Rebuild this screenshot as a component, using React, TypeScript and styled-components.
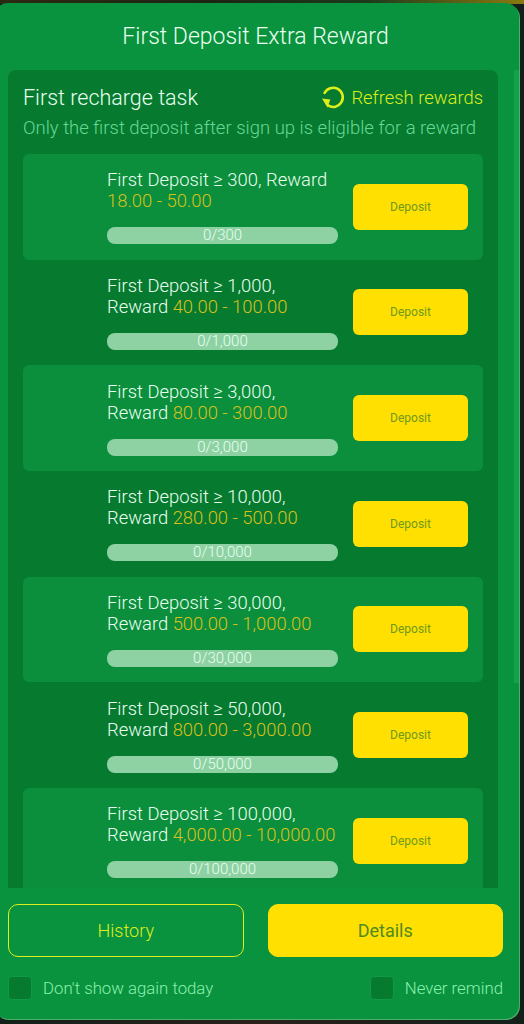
import React from 'react';
import styled, { createGlobalStyle } from 'styled-components';

const tasks = [
  { min: '300', reward: '18.00 - 50.00', goal: '0/300' },
  { min: '1,000', reward: '40.00 - 100.00', goal: '0/1,000' },
  { min: '3,000', reward: '80.00 - 300.00', goal: '0/3,000' },
  { min: '10,000', reward: '280.00 - 500.00', goal: '0/10,000' },
  { min: '30,000', reward: '500.00 - 1,000.00', goal: '0/30,000' },
  { min: '50,000', reward: '800.00 - 3,000.00', goal: '0/50,000' },
  { min: '100,000', reward: '4,000.00 - 10,000.00', goal: '0/100,000' },
];

const RefreshIcon = () => (
  <svg width="24" height="24" viewBox="0 0 24 24" fill="none">
    <path
      d="M3.6 8A9.6 9.6 0 1 1 7 20.4"
      stroke="#dcee1c"
      strokeWidth="2.6"
      strokeLinecap="round"
    />
    <path d="M1 13.4L9.4 14.6L6.4 22.4Z" fill="#dcee1c" />
  </svg>
);

export default function App() {
  return (
    <>
      <GlobalStyle />
      <Screen>
        <Panel>
          <Title>First Deposit Extra Reward</Title>
          <Task>
            <TaskHead>
              <TaskName>First recharge task</TaskName>
              <Refresh>
                <RefreshIcon />
                Refresh rewards
              </Refresh>
            </TaskHead>
            <Hint>Only the first deposit after sign up is eligible for a reward</Hint>
            <Rows>
              {tasks.map((t, i) => (
                <Row key={t.min} $shaded={i % 2 === 0}>
                  <Info>
                    <Text>
                      First Deposit ≥ {t.min}, Reward <Amount>{t.reward}</Amount>
                    </Text>
                    <Progress>{t.goal}</Progress>
                  </Info>
                  <DepositButton>Deposit</DepositButton>
                </Row>
              ))}
            </Rows>
          </Task>
          <Actions>
            <HistoryButton>History</HistoryButton>
            <DetailsButton>Details</DetailsButton>
          </Actions>
          <Options>
            <Option>
              <Check />
              Don't show again today
            </Option>
            <Option>
              <Check />
              Never remind
            </Option>
          </Options>
          <ScrollTrack />
        </Panel>
      </Screen>
    </>
  );
}

// ----- Styles ------ //

const GlobalStyle = createGlobalStyle`
  html, body {
    margin: 0;
    padding: 0;
    background: #16201a;
  }
  * {
    box-sizing: border-box;
  }
`;

const Screen = styled.div`
  width: 524px;
  height: 1024px;
  overflow: hidden;
  padding: 3px 5px 5px 0;
  font-family: Roboto, 'Liberation Sans', sans-serif;
  font-weight: 300;
  background: linear-gradient(90deg, #2c2a12 0%, #1e2414 40%, #1c3a1c 70%, #8a7a10 100%) top / 100% 4px no-repeat,
    linear-gradient(90deg, #13201a 0%, #2a201a 50%, #13201a 100%);
`;

const Panel = styled.div`
  position: relative;
  height: 100%;
  margin-left: -6px;
  padding: 0 0 0 14px;
  display: flex;
  flex-direction: column;
  background: #0a933e;
  border-radius: 14px;
  box-shadow: 1px 1px 0 #4fae6c;
`;

const Title = styled.div`
  width: 495px;
  height: 67px;
  padding-top: 18px;
  text-align: center;
  font-size: 23px;
  line-height: 32px;
  color: #e9fff0;
`;

const Task = styled.div`
  width: 490px;
  height: 818px;
  padding: 14px 15px 0;
  background: #067b2f;
  border-radius: 8px 8px 0 0;
  overflow: hidden;
`;

const TaskHead = styled.div`
  display: flex;
  align-items: center;
  justify-content: space-between;
  height: 26px;
`;

const TaskName = styled.div`
  font-size: 21.5px;
  color: #e9fff0;
`;

const Refresh = styled.div`
  display: flex;
  align-items: center;
  gap: 6px;
  font-size: 18.4px;
  color: #dcee1c;
`;

const Hint = styled.div`
  margin-top: 6px;
  height: 38px;
  font-size: 18.5px;
  line-height: 24px;
  color: #66d896;
  white-space: nowrap;
`;

const Rows = styled.div`
  display: flex;
  flex-direction: column;
`;

const Row = styled.div<{ $shaded: boolean }>`
  flex: none;
  height: 105.67px;
  padding: 0 15px 0 84px;
  display: flex;
  align-items: center;
  gap: 15px;
  border-radius: 6px;
  background: ${p => (p.$shaded ? '#0b8f3c' : 'transparent')};
`;

const Info = styled.div`
  width: 231px;
  flex: none;
`;

const Text = styled.div`
  height: 42px;
  margin-bottom: 16px;
  font-size: 18.4px;
  line-height: 21px;
  color: #e9fff0;
`;

const Amount = styled.span`
  color: #d8c01a;
`;

const Progress = styled.div`
  height: 17px;
  border-radius: 8px;
  background: #8ed2a4;
  text-align: center;
  font-size: 15px;
  line-height: 17px;
  color: #e9fff0;
`;

const DepositButton = styled.button`
  width: 115px;
  height: 46px;
  padding: 0;
  border: none;
  border-radius: 6px;
  background: #ffe000;
  font-family: inherit;
  font-size: 12px;
  font-weight: 400;
  color: #6f9a1e;
`;

const Actions = styled.div`
  margin-top: 16px;
  display: flex;
  gap: 24px;
  width: 495px;
`;

const HistoryButton = styled.button`
  flex: 1 1 0;
  width: 0;
  height: 53px;
  padding: 0;
  border: 1px solid #dcee1c;
  border-radius: 10px;
  background: transparent;
  font-family: inherit;
  font-size: 18px;
  font-weight: 300;
  color: #dcee1c;
`;

const DetailsButton = styled(HistoryButton)`
  border-color: #ffe000;
  background: #ffe000;
  font-weight: 400;
  color: #4f8a22;
`;

const Options = styled.div`
  margin-top: 19px;
  width: 495px;
  display: flex;
  justify-content: space-between;
`;

const Option = styled.div`
  display: flex;
  align-items: center;
  gap: 11px;
  font-size: 16.8px;
  color: #8bf0ae;
`;

const Check = styled.div`
  width: 24px;
  height: 24px;
  border: 1px solid #0f9a45;
  border-radius: 4px;
  background: #067b2f;
`;

const ScrollTrack = styled.div`
  position: absolute;
  top: 67px;
  right: 0;
  width: 5px;
  height: 613px;
  background: #12a24a;
`;
